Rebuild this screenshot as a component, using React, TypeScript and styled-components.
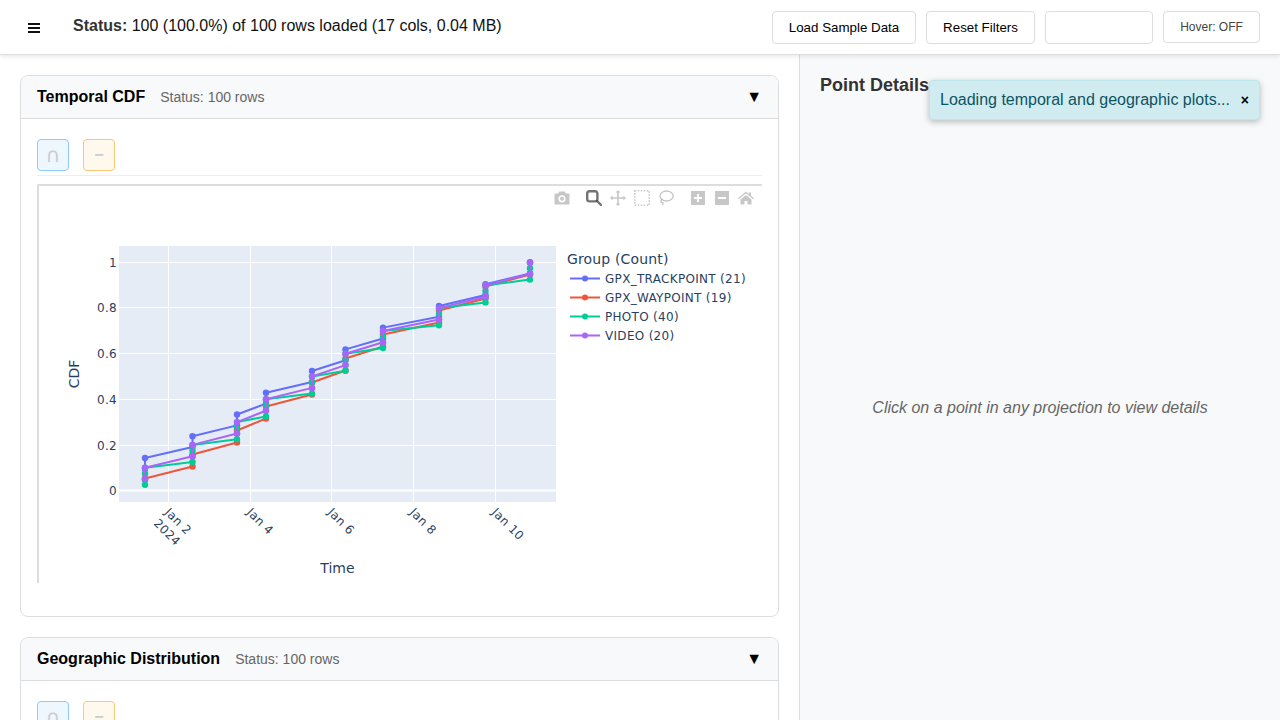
import React from "react";
import styled, { createGlobalStyle } from "styled-components";

const GlobalStyle = createGlobalStyle`
  html, body {
    margin: 0;
    padding: 0;
    height: 100%;
    font-family: "Liberation Sans", Arial, sans-serif;
    color: #000;
  }
  * { box-sizing: border-box; }
`;

const Page = styled.div`
  height: 100vh;
  display: flex;
  flex-direction: column;
  overflow: hidden;
  position: relative;
`;

const SidebarEdge = styled.div`
  position: absolute;
  left: 0;
  top: 0;
  bottom: 0;
  width: 0;
  box-shadow: 2px 0 6px rgba(0, 0, 0, 0.16);
  z-index: 5;
`;

const Header = styled.header`
  height: 55px;
  flex: none;
  display: flex;
  align-items: center;
  padding: 0 20px 0 28px;
  background: #fff;
  border-bottom: 1px solid #ddd;
  box-shadow: 0 2px 4px rgba(0, 0, 0, 0.08);
  position: relative;
  z-index: 2;
`;

const MenuIcon = styled.svg`
  width: 12px;
  height: 10px;
  margin: 2px 33px 0 0;
  flex: none;
`;

const StatusLine = styled.div`
  font-size: 16px;
  color: #111;
  margin-top: -2px;
  b { color: #333; }
`;

const HeaderActions = styled.div`
  margin-left: auto;
  display: flex;
  align-items: flex-start;
  gap: 10px;
`;

const HeaderButton = styled.button<{ $w: number; $small?: boolean }>`
  width: ${(p) => p.$w}px;
  height: ${(p) => (p.$small ? 32 : 33)}px;
  padding: 0;
  background: #fff;
  border: 1px solid #ddd;
  border-radius: 4px;
  font-family: inherit;
  font-size: ${(p) => (p.$small ? "12px" : "13.33px")};
  color: ${(p) => (p.$small ? "#444" : "#000")};
`;

const Content = styled.div`
  flex: 1;
  min-height: 0;
  display: flex;
`;

const Main = styled.main`
  width: 799px;
  flex: none;
  padding: 20px;
  overflow: hidden;
  display: flex;
  flex-direction: column;
  gap: 20px;
  background: #fff;
`;

const Card = styled.section`
  flex: none;
  border: 1px solid #ddd;
  border-radius: 8px;
  overflow: hidden;
`;

const CardHeader = styled.div`
  height: 43px;
  display: flex;
  align-items: center;
  padding: 0 16px;
  background: #f8f9fa;
  border-bottom: 1px solid #ddd;
`;

const CardTitle = styled.h3`
  margin: 0;
  font-size: 16px;
  font-weight: 700;
  color: #000;
`;

const CardStatus = styled.span`
  margin-left: 15px;
  font-size: 14px;
  color: #666;
`;

const Collapse = styled.span`
  margin-left: auto;
  font-size: 16px;
  color: #000;
`;

const CardBody = styled.div`
  padding: 20px 16px 33px;
`;

const SetTools = styled.div`
  height: 37px;
  display: flex;
  align-items: flex-start;
  gap: 14px;
  border-bottom: 1px solid #eee;
  margin-bottom: 8px;
`;

const SetButton = styled.button<{ $tone: "blue" | "orange" }>`
  width: 32px;
  height: 32px;
  padding: 0;
  border-radius: 4px;
  border: 1px solid ${(p) => (p.$tone === "blue" ? "#8fcbfb" : "#fdc875")};
  background: ${(p) => (p.$tone === "blue" ? "#eef6fe" : "#fff8ec")};
  color: #c9cdd1;
  font-family: ${(p) =>
    p.$tone === "blue" ? '"DejaVu Sans", sans-serif' : '"Liberation Sans", sans-serif'};
  font-size: ${(p) => (p.$tone === "blue" ? 20 : 16)}px;
  line-height: 1;
  font-weight: ${(p) => (p.$tone === "blue" ? 400 : 700)};
`;

const PlotFrame = styled.div`
  position: relative;
  height: 399px;
  border-top: 2px solid #ddd;
  border-left: 2px solid #ddd;
  border-top-left-radius: 2px;
`;

const ChartSvg = styled.svg`
  display: block;
  font-family: "DejaVu Sans", Verdana, sans-serif;
`;

const ModeBar = styled.div`
  position: absolute;
  top: 4px;
  right: 8px;
  display: flex;
  gap: 16px;
`;

const ModeGroup = styled.div`
  display: flex;
  gap: 8px;
`;

const ModeIcon = styled.svg<{ $active?: boolean }>`
  width: 16px;
  height: 16px;
  display: block;
  color: ${(p) => (p.$active ? "rgba(68,68,68,0.75)" : "rgba(68,68,68,0.3)")};
`;

const SidePanel = styled.aside`
  flex: 1;
  display: flex;
  flex-direction: column;
  padding: 20px 20px 0;
  background: #f8f9fa;
  border-left: 1px solid #ddd;
`;

const PanelTitle = styled.h3`
  margin: 0;
  font-size: 18px;
  line-height: 21px;
  font-weight: 700;
  color: #333;
`;

const Placeholder = styled.div`
  flex: 1;
  display: flex;
  align-items: center;
  justify-content: center;
  font-size: 16px;
  font-style: italic;
  color: #666;
`;

const Toast = styled.div`
  position: absolute;
  top: 80px;
  right: 20px;
  width: 331px;
  height: 40px;
  display: flex;
  align-items: center;
  justify-content: space-between;
  padding: 0 10px;
  background: #d1ecf1;
  border: 1px solid #bee5eb;
  border-radius: 4px;
  box-shadow: 0 2px 6px rgba(0, 0, 0, 0.25);
  color: #0c5460;
  font-size: 16px;
  z-index: 10;
`;

const ToastClose = styled.span`
  font-size: 14px;
  font-weight: 700;
  color: #000;
`;

const INK = "#2a3f5f";
const xs = [145, 192.5, 237, 266, 312, 345.5, 383, 439, 485.5, 530];
const yTicks = [
  { label: "0", y: 490.5 },
  { label: "0.2", y: 445.5 },
  { label: "0.4", y: 399.5 },
  { label: "0.6", y: 353.5 },
  { label: "0.8", y: 307.5 },
  { label: "1", y: 262.5 },
];
const xTicks = [
  { label: "Jan 2", x: 168.5 },
  { label: "Jan 4", x: 250.5 },
  { label: "Jan 6", x: 331.5 },
  { label: "Jan 8", x: 413.5 },
  { label: "Jan 10", x: 495.5 },
];

const toY = (v: number) => 490.5 - v * 228;

// rows per timestamp: first timestamp differs, the rest are even
function buildSeries(first: number, rest: number, total: number) {
  const pts: [number, number][] = [];
  let n = 0;
  xs.forEach((x, i) => {
    const count = i === 0 ? first : rest;
    for (let k = 0; k < count; k++) {
      n += 1;
      pts.push([x, toY(n / total)]);
    }
  });
  return pts;
}

const series = [
  { name: "GPX_TRACKPOINT (21)", color: "#636efa", pts: buildSeries(3, 2, 21) },
  { name: "GPX_WAYPOINT (19)", color: "#ef553b", pts: buildSeries(1, 2, 19) },
  { name: "PHOTO (40)", color: "#00cc96", pts: buildSeries(4, 4, 40) },
  { name: "VIDEO (20)", color: "#ab63fa", pts: buildSeries(2, 2, 20) },
];

const CdfChart = () => (
  <ChartSvg width={722} height={397} viewBox="39 186 722 397">
    <rect x={119} y={246} width={437} height={256} fill="#e5ecf6" />
    {xTicks.map((t) => (
      <line key={t.x} x1={t.x} x2={t.x} y1={246} y2={502} stroke="#fff" />
    ))}
    {yTicks.map((t) => (
      <line
        key={t.label}
        x1={119}
        x2={556}
        y1={t.y}
        y2={t.y}
        stroke="#fff"
        strokeWidth={t.label === "0" ? 2 : 1}
      />
    ))}
    {series.map((s) => (
      <g key={s.name}>
        <polyline
          points={s.pts.map((p) => p.join(",")).join(" ")}
          fill="none"
          stroke={s.color}
          strokeWidth={2}
          strokeLinejoin="round"
        />
        {s.pts.map((p, i) => (
          <circle key={i} cx={p[0]} cy={p[1]} r={3.2} fill={s.color} />
        ))}
      </g>
    ))}
    <g fontSize={12} fill={INK} letterSpacing={0.3}>
      {yTicks.map((t) => (
        <text key={t.label} x={117} y={t.y + 4} textAnchor="end">
          {t.label}
        </text>
      ))}
      {xTicks.map((t) => (
        <text key={t.label} transform={`translate(${t.x - 4.5} 513) rotate(45)`}>
          {t.label}
          {t.label === "Jan 2" && (
            <tspan x={0} dy="1.3em">
              2024
            </tspan>
          )}
        </text>
      ))}
    </g>
    <text x={337.5} y={573} fontSize={14} fill={INK} textAnchor="middle">
      Time
    </text>
    <text
      transform="translate(79 374) rotate(-90)"
      fontSize={14}
      fill={INK}
      textAnchor="middle"
    >
      CDF
    </text>
    <text x={567} y={264} fontSize={14} fill={INK} letterSpacing={0.15}>
      Group (Count)
    </text>
    {series.map((s, i) => {
      const y = 278.5 + i * 19;
      return (
        <g key={s.name}>
          <line x1={570} x2={600} y1={y} y2={y} stroke={s.color} strokeWidth={2} />
          <circle cx={585} cy={y} r={3} fill={s.color} />
          <text x={605} y={y + 4.5} fontSize={12} fill={INK} letterSpacing={0.3}>
            {s.name}
          </text>
        </g>
      );
    })}
  </ChartSvg>
);

const PlotModeBar = () => (
  <ModeBar>
    <ModeGroup>
      <ModeIcon viewBox="0 0 16 16">
        <path
          fill="currentColor"
          fillRule="evenodd"
          d="M5.500 1.500h5L12 3.500h2.500a1 1 0 0 1 1 1v9a1 1 0 0 1-1 1h-13a1 1 0 0 1-1-1v-9a1 1 0 0 1 1-1H4zM8 5.200a3.600 3.600 0 1 0 0 7.200 3.600 3.600 0 0 0 0-7.200zm0 1.600a2 2 0 1 1 0 4 2 2 0 0 1 0-4z"
        />
      </ModeIcon>
    </ModeGroup>
    <ModeGroup>
      <ModeIcon viewBox="0 0 16 16" $active>
        <rect x="1.200" y="1.200" width="10.200" height="10.200" rx="2.400" fill="none" stroke="currentColor" strokeWidth="2.400" />
        <path d="M11 11 15 15" stroke="currentColor" strokeWidth="2.400" strokeLinecap="round" />
      </ModeIcon>
      <ModeIcon viewBox="0 0 16 16">
        <path
          fill="currentColor"
          d="M8 0l2.400 2.600H8.800v4.600h4.600V5.600L16 8l-2.600 2.400V8.800H8.800v4.600h1.600L8 16l-2.400-2.600h1.600V8.800H2.600v1.600L0 8l2.600-2.400v1.600h4.600V2.600H5.600z"
        />
      </ModeIcon>
      <ModeIcon viewBox="0 0 16 16">
        <rect x="0.750" y="0.750" width="14.500" height="14.500" fill="none" stroke="currentColor" strokeWidth="1.500" strokeDasharray="1.500 1.500" />
      </ModeIcon>
      <ModeIcon viewBox="0 0 16 16">
        <ellipse cx="8.600" cy="6" rx="6.600" ry="5" fill="none" stroke="currentColor" strokeWidth="1.400" />
        <path d="M4 9.500c-1.600 1-1.400 3 .2 3 1 0 1 1.200.2 2.700" fill="none" stroke="currentColor" strokeWidth="1.400" />
      </ModeIcon>
    </ModeGroup>
    <ModeGroup>
      <ModeIcon viewBox="0 0 16 16">
        <path
          fill="currentColor"
          fillRule="evenodd"
          d="M1 1h14v14H1zM7 4v3H4v2h3v3h2V9h3V7H9V4z"
        />
      </ModeIcon>
      <ModeIcon viewBox="0 0 16 16">
        <path fill="currentColor" fillRule="evenodd" d="M1 1h14v14H1zM4 7v2h8V7z" />
      </ModeIcon>
      <ModeIcon viewBox="0 0 16 16">
        <path
          fill="currentColor"
          d="M8 1.500 11 4V2.500h2v3.200l3 2.600-.8.900L8 3.200.8 9.200 0 8.300zM2.500 9.500 8 5l5.500 4.500v5h-4v-3.500h-3v3.500h-4z"
        />
      </ModeIcon>
    </ModeGroup>
  </ModeBar>
);

const SetTool = () => (
  <SetTools>
    <SetButton $tone="blue">∩</SetButton>
    <SetButton $tone="orange">−</SetButton>
  </SetTools>
);

const App = () => (
  <Page>
    <GlobalStyle />
    <SidebarEdge />
    <Header>
      <MenuIcon viewBox="0 0 12 10">
        <path d="M0 1h12M0 5h12M0 9h12" stroke="#111" strokeWidth="2" />
      </MenuIcon>
      <StatusLine>
        <b>Status:</b> 100 (100.0%) of 100 rows loaded (17 cols, 0.04 MB)
      </StatusLine>
      <HeaderActions>
        <HeaderButton $w={144}>Load Sample Data</HeaderButton>
        <HeaderButton $w={109}>Reset Filters</HeaderButton>
        <HeaderButton $w={108} />
        <HeaderButton $w={97} $small>
          Hover: OFF
        </HeaderButton>
      </HeaderActions>
    </Header>
    <Content>
      <Main>
        <Card>
          <CardHeader>
            <CardTitle>Temporal CDF</CardTitle>
            <CardStatus>Status: 100 rows</CardStatus>
            <Collapse>▼</Collapse>
          </CardHeader>
          <CardBody>
            <SetTool />
            <PlotFrame>
              <CdfChart />
              <PlotModeBar />
            </PlotFrame>
          </CardBody>
        </Card>
        <Card>
          <CardHeader>
            <CardTitle>Geographic Distribution</CardTitle>
            <CardStatus>Status: 100 rows</CardStatus>
            <Collapse>▼</Collapse>
          </CardHeader>
          <CardBody>
            <SetTool />
          </CardBody>
        </Card>
      </Main>
      <SidePanel>
        <PanelTitle>Point Details</PanelTitle>
        <Placeholder>Click on a point in any projection to view details</Placeholder>
      </SidePanel>
    </Content>
    <Toast>
      Loading temporal and geographic plots...
      <ToastClose>×</ToastClose>
    </Toast>
  </Page>
);

export default App;
